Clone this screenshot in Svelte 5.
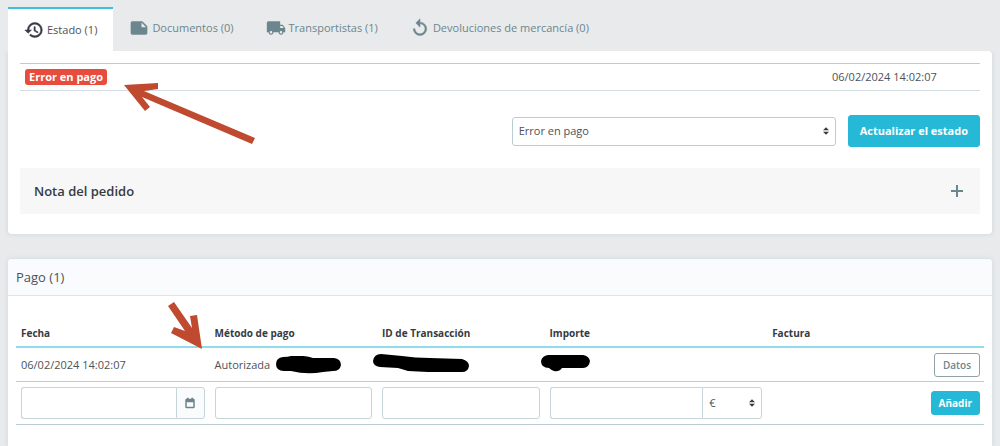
<script lang="ts">
  const tabs = [
    { id: 'history', label: 'Estado (1)' },
    { id: 'note', label: 'Documentos (0)' },
    { id: 'shipping', label: 'Transportistas (1)' },
    { id: 'replay', label: 'Devoluciones de mercancía (0)' }
  ];

  const icons: Record<string, string> = {
    history:
      'M13 3a9 9 0 0 0-9 9H1l3.89 3.89.07.14L9 12H6c0-3.87 3.13-7 7-7s7 3.13 7 7-3.13 7-7 7c-1.93 0-3.68-.79-4.94-2.06l-1.42 1.42A8.95 8.95 0 0 0 13 21a9 9 0 0 0 0-18zm-1 5v5l4.28 2.54.72-1.21-3.5-2.08V8H12z',
    note: 'M22 10l-6-6H4c-1.1 0-2 .9-2 2v12c0 1.1.9 2 2 2h16c1.1 0 2-.9 2-2v-8zm-7-4.5l5.5 5.5H15V5.5z',
    shipping:
      'M20 8h-3V4H3c-1.1 0-2 .9-2 2v11h2c0 1.66 1.34 3 3 3s3-1.34 3-3h6c0 1.66 1.34 3 3 3s3-1.34 3-3h2v-5l-3-4zM6 18.5c-.83 0-1.5-.67-1.5-1.5s.67-1.5 1.5-1.5 1.5.67 1.5 1.5-.67 1.5-1.5 1.5zm13.5-9l1.96 2.5H17V9.5h2.5zm-1.5 9c-.83 0-1.5-.67-1.5-1.5s.67-1.5 1.5-1.5 1.5.67 1.5 1.5-.67 1.5-1.5 1.5z',
    replay:
      'M12 5V1L7 6l5 5V7c3.31 0 6 2.69 6 6s-2.69 6-6 6-6-2.69-6-6H4c0 4.42 3.58 8 8 8s8-3.58 8-8-3.58-8-8-8z',
    event: 'M19 4h-1V2h-3v2H9V2H6v2H5c-1.11 0-2 .9-2 2v14c0 1.1.89 2 2 2h14c1.1 0 2-.9 2-2V6c0-1.1-.9-2-2-2zm0 16H5V10h14v10z'
  };

  let activeTab = 'history';
  let status = 'Error en pago';
  let currency = '€';
  let noteOpen = false;
</script>

<main class="page">
  <nav class="tabs">
    {#each tabs as tab}
      <button class="tab" class:active={activeTab === tab.id} on:click={() => (activeTab = tab.id)}>
        <svg class="icon {tab.id}" viewBox="0 0 24 24"><path d={icons[tab.id]} /></svg>
        <span>{tab.label}</span>
      </button>
    {/each}
  </nav>

  <section class="card status-card">
    <table class="history-table">
      <tbody>
        <tr>
          <td><span class="badge">Error en pago</span></td>
          <td class="date">06/02/2024 14:02:07</td>
        </tr>
      </tbody>
    </table>

    <form class="status-form" on:submit|preventDefault>
      <div class="select-wrap status-select">
        <select aria-label="Estado" bind:value={status}>
          <option>Error en pago</option>
        </select>
        <svg class="caret" viewBox="0 0 4 5"><path d="M2 0L0 2h4zM2 5L0 3h4z" /></svg>
      </div>
      <button class="btn primary">Actualizar el estado</button>
    </form>

    <button class="note-toggle" aria-expanded={noteOpen} on:click={() => (noteOpen = !noteOpen)}>
      <span>Nota del pedido</span>
      <svg class="plus" viewBox="0 0 12 12"><path d="M5 0h2v5h5v2H7v5H5V7H0V5h5z" /></svg>
    </button>
  </section>

  <section class="card payment-card">
    <h3>Pago (1)</h3>
    <table class="payments">
      <colgroup>
        <col class="c-date" />
        <col class="c-method" />
        <col class="c-id" />
        <col class="c-amount" />
        <col />
        <col class="c-action" />
      </colgroup>
      <thead>
        <tr>
          <th>Fecha</th>
          <th>Método de pago</th>
          <th>ID de Transacción</th>
          <th>Importe</th>
          <th>Factura</th>
          <th></th>
        </tr>
      </thead>
      <tbody>
        <tr class="payment">
          <td>06/02/2024 14:02:07</td>
          <td>
            <div class="method">
              <span>Autorizada</span>
              <svg width="66" height="18" viewBox="0 0 66 18">
                <path d="M7 1Q12 1 15 0Q29-1 37 2H58Q65 3 65 9Q64 15 57 15L47 16Q31 19 15 15H8Q0 15 0 8Q0 2 7 1Z" />
              </svg>
            </div>
          </td>
          <td>
            <svg class="redacted" width="96" height="19" viewBox="0 0 96 19">
              <path d="M8 0L29 2Q42 4 57 4L89 5Q96 7 96 12Q95 18 89 18H55L35 17L25 14L7 13Q0 12 0 7Q1 0 8 0Z" />
            </svg>
          </td>
          <td>
            <svg class="redacted" width="49" height="19" viewBox="0 0 49 19">
              <path d="M7 1H42Q48 2 49 7Q48 14 42 14H21Q18 18 13 17Q10 16 8 14Q0 14 0 7Q1 2 7 1Z" />
            </svg>
          </td>
          <td></td>
          <td class="action"><button class="btn small outline">Datos</button></td>
        </tr>
        <tr>
          <td>
            <div class="group">
              <input type="text" aria-label="Fecha" />
              <span class="addon"><svg viewBox="0 0 24 24"><path d={icons.event} /></svg></span>
            </div>
          </td>
          <td><div class="group"><input type="text" aria-label="Método de pago" /></div></td>
          <td><div class="group"><input type="text" aria-label="ID de Transacción" /></div></td>
          <td>
            <div class="group">
              <input type="text" aria-label="Importe" />
              <div class="select-wrap currency">
                <select aria-label="Moneda" bind:value={currency}>
                  <option>€</option>
                </select>
                <svg class="caret" viewBox="0 0 4 5"><path d="M2 0L0 2h4zM2 5L0 3h4z" /></svg>
              </div>
            </div>
          </td>
          <td></td>
          <td class="action"><button class="btn small primary">Añadir</button></td>
        </tr>
      </tbody>
    </table>
  </section>

  <!-- arrows pointing at the failed status and the payment method -->
  <svg class="arrows" width="260" height="360" viewBox="0 0 260 360">
    <path d="M124 85L158 83V89L144 91L255 138L252 144L142 97L150 107L145 111Z" />
    <path d="M174 302L168 306L185 331L174 327L171 333L202 349L197 315L190 316L192 328Z" />
  </svg>
</main>

<style>
  :global(body) {
    margin: 0;
    background: #e8eaeb;
  }

  .page {
    position: relative;
    box-sizing: border-box;
    min-height: 100vh;
    display: flex;
    flex-direction: column;
    padding: 7px 8px 0;
    font-family: 'Open Sans', 'Noto Sans', sans-serif;
    font-size: 11px;
    line-height: 16px;
    color: #4c5357;
  }

  button,
  input,
  select {
    box-sizing: border-box;
    font: inherit;
    color: inherit;
  }

  button {
    cursor: pointer;
  }

  .tabs {
    display: flex;
    height: 44px;
  }

  .tab {
    display: flex;
    align-items: center;
    gap: 3px;
    padding: 0 16px 2px;
    border: none;
    background: none;
    color: #6c868e;
  }

  .tab.active {
    padding-bottom: 0;
    border-top: 2px solid #3ebfdb;
    background: white;
    color: #4c5357;
  }

  .icon {
    width: 20px;
    height: 20px;
    fill: currentColor;
  }

  .icon.history,
  .icon.replay {
    stroke: currentColor;
    stroke-width: 0.6;
  }

  .icon.history {
    color: #363a41;
  }

  .card {
    background: white;
    border-radius: 4px;
    box-shadow: 0 0 4px rgba(120, 160, 175, 0.25);
  }

  .status-card {
    padding: 12px 12px 20px;
    border-top-left-radius: 0;
    clip-path: inset(0 -4px -4px -4px);
  }

  table {
    width: 100%;
    border-collapse: collapse;
  }

  .history-table td {
    height: 26px;
    padding: 0 5px;
    border-top: 1px solid #bbcdd2;
    border-bottom: 1px solid #d3dfe3;
  }

  .history-table .date {
    width: 143px;
  }

  .badge {
    display: inline-block;
    padding: 0 4px;
    border-radius: 3px;
    background: #e74c3c;
    color: white;
    font-weight: 700;
  }

  .status-form {
    display: flex;
    justify-content: flex-end;
    align-items: center;
    gap: 12px;
    margin: 24px 0 21px;
  }

  .select-wrap {
    position: relative;
  }

  .status-select {
    width: 324px;
  }

  select {
    width: 100%;
    height: 29px;
    padding: 0 6px;
    border: 1px solid #bbcdd2;
    border-radius: 3px;
    background: white;
    appearance: none;
  }

  .caret {
    position: absolute;
    top: 50%;
    right: 7px;
    width: 6px;
    height: 8px;
    margin-top: -4px;
    fill: #363a41;
    pointer-events: none;
  }

  .btn {
    border: 1px solid #25b9d7;
    border-radius: 3px;
    font-weight: 600;
    white-space: nowrap;
  }

  .status-form .btn {
    height: 32px;
    padding: 0 11px;
    font-weight: 700;
  }

  .primary {
    background: #25b9d7;
    color: white;
  }

  .note-toggle {
    display: flex;
    justify-content: space-between;
    align-items: center;
    width: 100%;
    height: 46px;
    padding: 0 17px 0 14px;
    border: none;
    background: #f7f7f7;
    color: #363a41;
    font-size: 13px;
    font-weight: 600;
  }

  .plus {
    width: 12px;
    height: 12px;
    fill: #6c868e;
  }

  .payment-card {
    flex: 1;
    margin-top: 25px;
    border-radius: 4px 4px 0 0;
  }

  h3 {
    margin: 0;
    padding: 10px 8px;
    border-bottom: 1px solid #dbe6e9;
    border-radius: 4px 4px 0 0;
    background: #fafbfc;
    font-size: 13px;
    font-weight: 500;
  }

  .payments {
    width: calc(100% - 16px);
    margin: 24px 8px 0;
    table-layout: fixed;
  }

  .c-date {
    width: 20%;
  }

  .c-method,
  .c-id {
    width: 17.3%;
  }

  .c-amount {
    width: 23%;
  }

  .c-action {
    width: 72px;
  }

  th {
    height: 26px;
    padding: 0 5px;
    border-bottom: 2px solid #8fdcea;
    color: #363a41;
    font-size: 10px;
    font-weight: 700;
    text-align: left;
  }

  .payments td {
    height: 42px;
    padding: 0 5px;
    border-bottom: 1px solid #bbcdd2;
  }

  .payments .payment td {
    height: 33px;
  }

  .payments .action {
    padding-right: 4px;
    text-align: right;
  }

  .method {
    display: flex;
    align-items: center;
    gap: 6px;
  }

  .redacted {
    display: block;
    margin: 0 0 3px -9px;
  }

  .group {
    display: flex;
  }

  .group input {
    flex: 1;
    min-width: 0;
    height: 32px;
    border: 1px solid #c5d5da;
    border-radius: 3px;
  }

  .group input:not(:last-child) {
    border-right: none;
    border-radius: 3px 0 0 3px;
  }

  .addon {
    box-sizing: border-box;
    display: flex;
    align-items: center;
    justify-content: center;
    width: 29px;
    border: 1px solid #c5d5da;
    border-radius: 0 3px 3px 0;
    background: #fafbfc;
  }

  .addon svg {
    width: 12px;
    height: 12px;
    fill: #6c868e;
    stroke: #6c868e;
  }

  .currency {
    width: 60px;
  }

  .currency select {
    height: 32px;
    border-color: #c5d5da;
    border-radius: 0 3px 3px 0;
  }

  .small {
    height: 24px;
    padding: 0 8px;
    font-size: 10px;
  }

  .small.primary {
    padding: 0 7px;
    font-weight: 700;
  }

  .outline {
    border-color: #8fa3a9;
    background: white;
    color: #6c868e;
  }

  .arrows {
    position: absolute;
    top: 0;
    left: 0;
    fill: #bf4a30;
    pointer-events: none;
  }
</style>
